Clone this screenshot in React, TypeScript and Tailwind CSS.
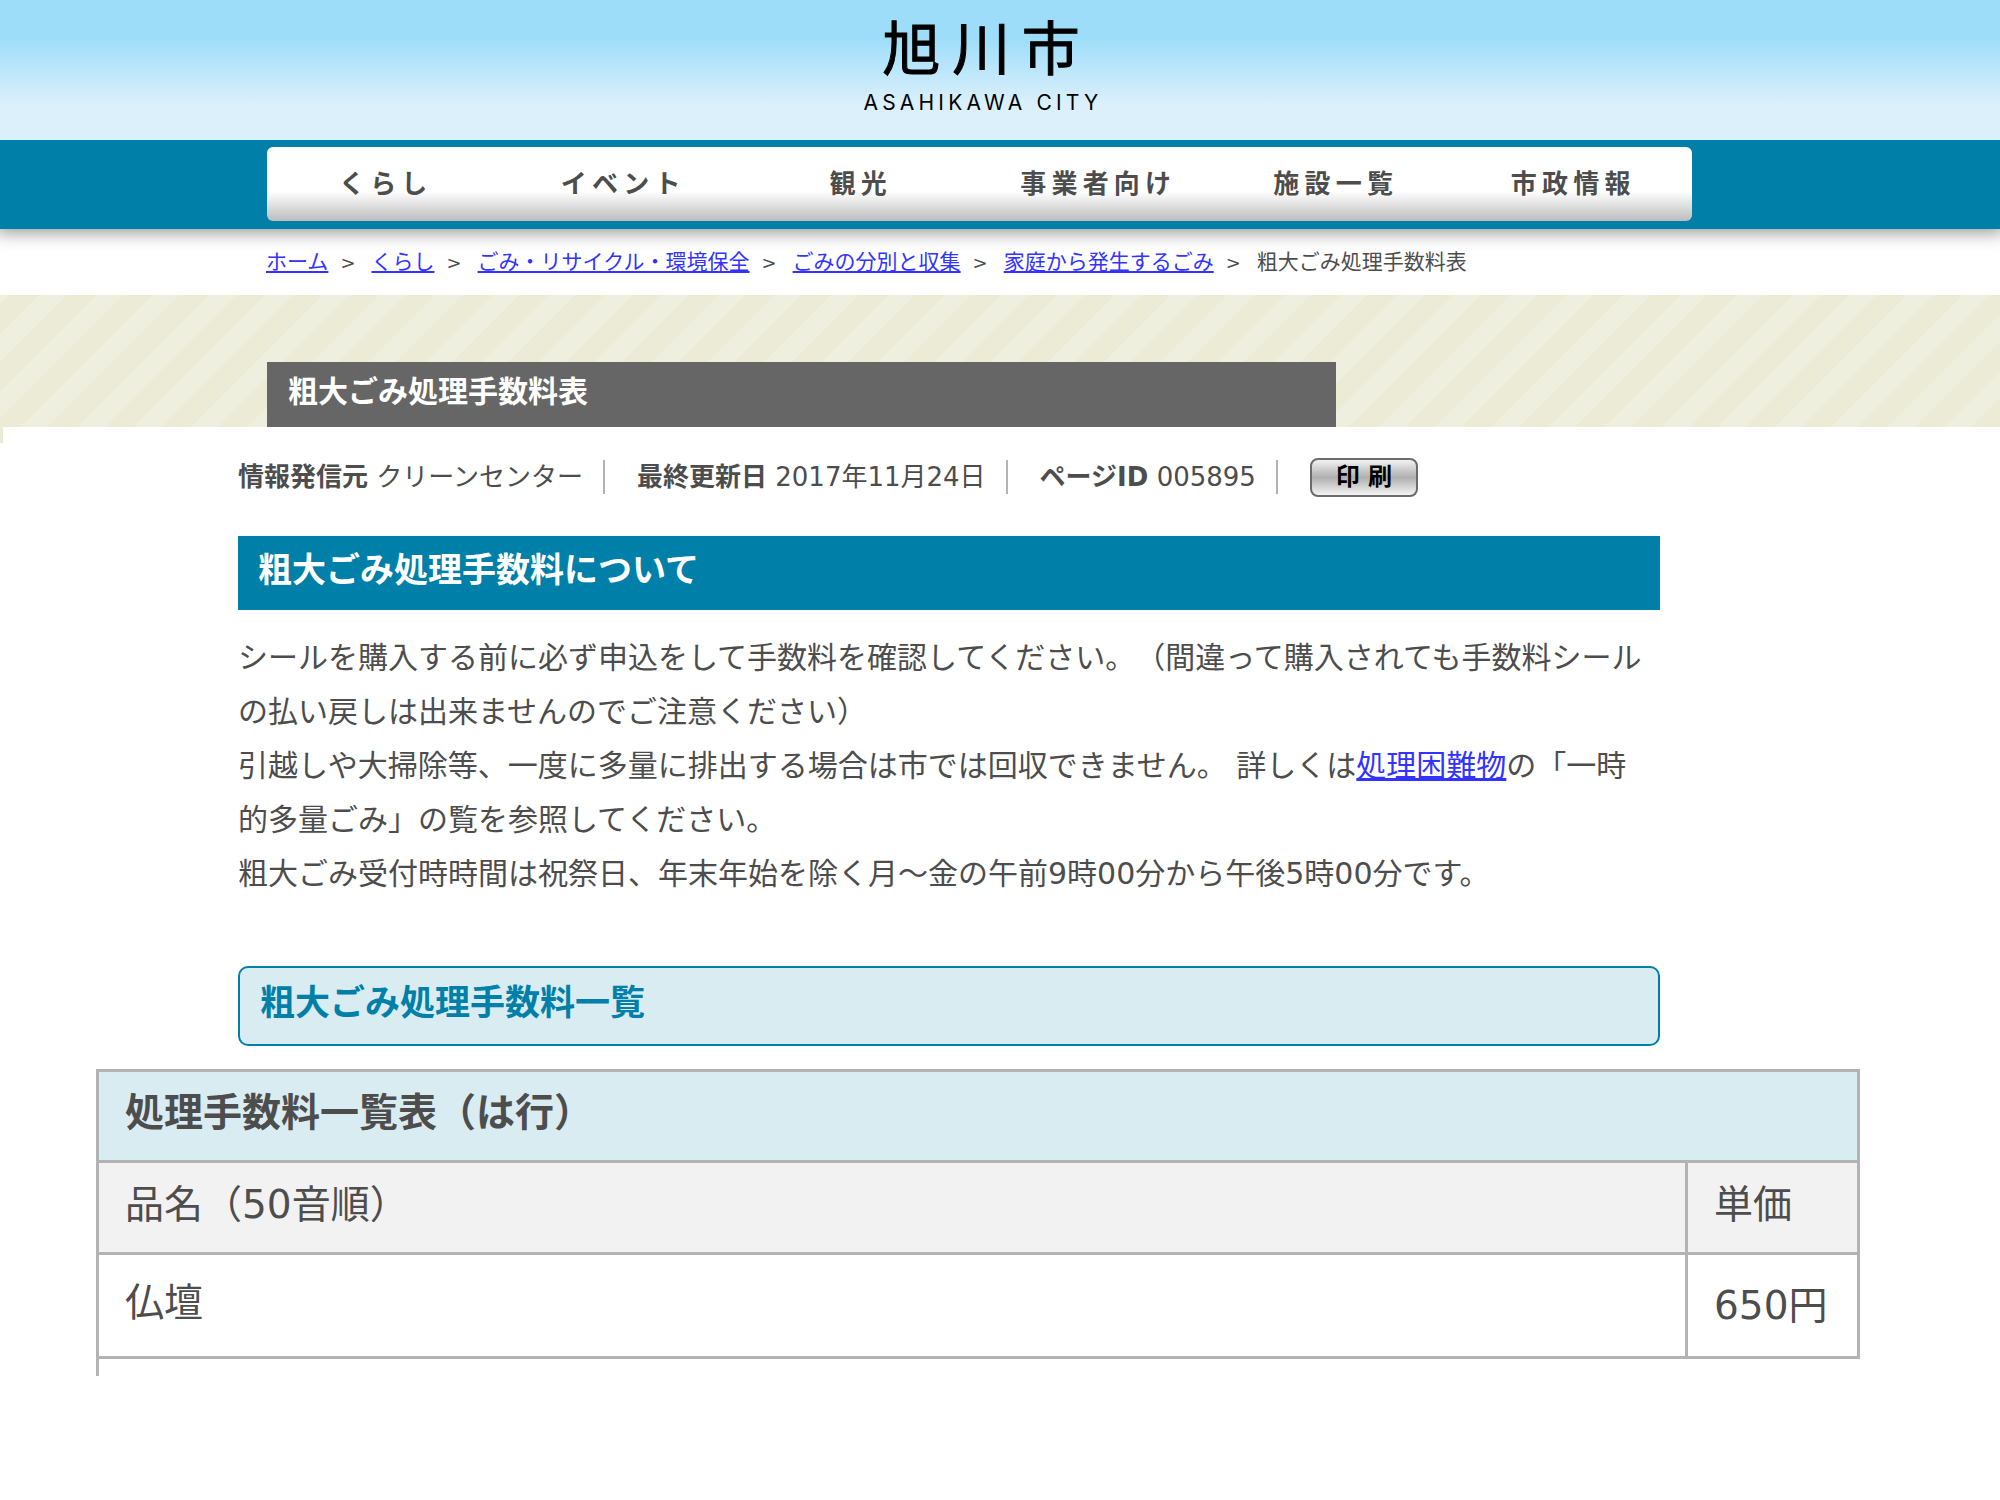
interface Crumb {
  label: string
  current?: boolean
}

const NAV = ['くらし', 'イベント', '観光', '事業者向け', '施設一覧', '市政情報']

const CRUMBS: Crumb[] = [
  { label: 'ホーム' },
  { label: 'くらし' },
  { label: 'ごみ・リサイクル・環境保全' },
  { label: 'ごみの分別と収集' },
  { label: '家庭から発生するごみ' },
  { label: '粗大ごみ処理手数料表', current: true },
]

const INFO = [
  { label: '情報発信元', value: 'クリーンセンター' },
  { label: '最終更新日', value: '2017年11月24日' },
  { label: 'ページID', value: '005895' },
]

const ROWS = [{ name: '仏壇', price: '650円' }]

function Header() {
  return (
    <header className="relative z-10 flex h-[140px] flex-col items-center bg-linear-to-b from-[#9dddf9] from-27% to-[#dcf0fc] to-75% pr-[38px] text-black">
      <div className="mt-2 pl-3 font-['Noto_Sans_CJK_JP',sans-serif] text-[58px] leading-[74px] tracking-[0.2em] [-webkit-text-stroke:1px_black]">旭川市</div>
      <div className="pl-1 font-['Inter',sans-serif] text-[21px] leading-[42px] tracking-[0.2em]">ASAHIKAWA CITY</div>
    </header>
  )
}

function Nav() {
  return (
    <nav className="bg-[#0080a8] pt-[7px] pr-[308px] pb-2 pl-[267px] shadow-[0_0_16px_4px_rgba(0,0,0,0.4)]">
      <ul className="grid h-[74px] grid-cols-6 items-center rounded-md bg-linear-to-b from-white from-60% to-[#bdbdbf]">
        {NAV.map((item) => (
          <li key={item} className="text-center">
            <a href="#" className="text-[26px] leading-[40px] font-bold tracking-[0.2em]">{item}</a>
          </li>
        ))}
      </ul>
    </nav>
  )
}

function Breadcrumb() {
  return (
    <ol className="relative flex h-[66px] items-center pr-[308px] pl-[266px] text-[21px] leading-[32px]">
      {CRUMBS.map((c) => (
        <li key={c.label} className="whitespace-nowrap">
          {c.current ? (
            c.label
          ) : (
            <>
              <a href="#" className="text-[#3333ff] underline">{c.label}</a>
              <span className="pr-4 pl-3 text-[18px]">&gt;</span>
            </>
          )}
        </li>
      ))}
    </ol>
  )
}

function PageInfo() {
  return (
    <div className="flex items-center text-[26px] leading-[40px]">
      {INFO.map((i) => (
        <div key={i.label} className="flex items-center whitespace-nowrap">
          <span><b>{i.label}</b> {i.value}</span>
          <span className="mr-8 ml-5 h-[34px] w-[2px] bg-[#b3b3b3]" />
        </div>
      ))}
      <button
        type="button"
        className="h-[39px] w-[108px] rounded-lg border-2 border-[#6b6b6b] bg-linear-to-b from-[#f2f2f2] via-[#b0b0b0] to-[#f4f4f4] text-[24px] leading-[32px] font-bold text-black"
      >
        印 刷
      </button>
    </div>
  )
}

function FeeTable() {
  return (
    <table className="mt-[23px] w-full border-collapse text-left text-[39px] leading-[60px]">
      <thead>
        <tr className="h-[91px] bg-[#d9ecf2]">
          <th colSpan={2} className="border-3 border-[#b3b3b3] px-[26px] pb-1.5 font-bold">処理手数料一覧表（は行）</th>
        </tr>
        <tr className="h-[92px] bg-[#f2f2f2]">
          <th className="border-3 border-[#b3b3b3] px-[26px] pb-1.5 font-normal">品名（50音順）</th>
          <th className="w-[172px] border-3 border-[#b3b3b3] pb-1.5 pl-[26px] font-normal">単価</th>
        </tr>
      </thead>
      <tbody>
        {ROWS.map((r) => (
          <tr key={r.name} className="h-[104px]">
            <td className="border-3 border-[#b3b3b3] px-[26px] pb-1.5">{r.name}</td>
            <td className="border-3 border-[#b3b3b3] pl-[26px] whitespace-nowrap">{r.price}</td>
          </tr>
        ))}
        <tr className="h-[18px]">
          <td colSpan={2} className="border-l-3 border-[#b3b3b3]" />
        </tr>
      </tbody>
    </table>
  )
}

export default function App() {
  return (
    <div className="min-h-screen bg-white font-['DejaVu_Sans','Noto_Sans_CJK_JP',sans-serif] text-[#4d4d4d]">
      <Header />
      <Nav />
      <Breadcrumb />

      <div className="bg-[repeating-linear-gradient(135deg,#eeefde_0_7px,#ebebd6_7px_28px,#eeefde_28px_40px)] pt-[67px] pr-[664px] pl-[267px]">
        <h1 className="h-[65px] bg-[#666666] px-[21px] text-[30px] leading-[60px] font-bold text-white">粗大ごみ処理手数料表</h1>
      </div>

      <main>
        <div className="mb-[14px] h-4 w-[3px] bg-[#ebebd6]" />
        <div className="pr-[340px] pl-[238px]">
          <PageInfo />
          <h2 className="mt-[39px] h-[74px] bg-[#0080a8] px-5 text-[34px] leading-[68px] font-bold text-white">
            粗大ごみ処理手数料について
          </h2>
          <p className="mt-[21px] text-[30px] leading-[54px] [text-spacing-trim:space-all]">
            シールを購入する前に必ず申込をして手数料を確認してください。（間違って購入されても手数料シール
            <br />
            の払い戻しは出来ませんのでご注意ください）
            <br />
            引越しや大掃除等、一度に多量に排出する場合は市では回収できません。 詳しくは
            <a href="#" className="text-[#3333ff] underline">処理困難物</a>の「一時
            <br />
            的多量ごみ」の覧を参照してください。
            <br />
            粗大ごみ受付時時間は祝祭日、年末年始を除く月～金の午前9時00分から午後5時00分です。
          </p>
          <h3 className="mt-[65px] h-[80px] rounded-[10px] border-2 border-[#0080a8] bg-[#d9ecf2] px-5 text-[35px] leading-[70px] font-bold text-[#0080a8]">
            粗大ごみ処理手数料一覧
          </h3>
        </div>
        <div className="pr-[140px] pl-[96px]">
          <FeeTable />
        </div>
      </main>
    </div>
  )
}
